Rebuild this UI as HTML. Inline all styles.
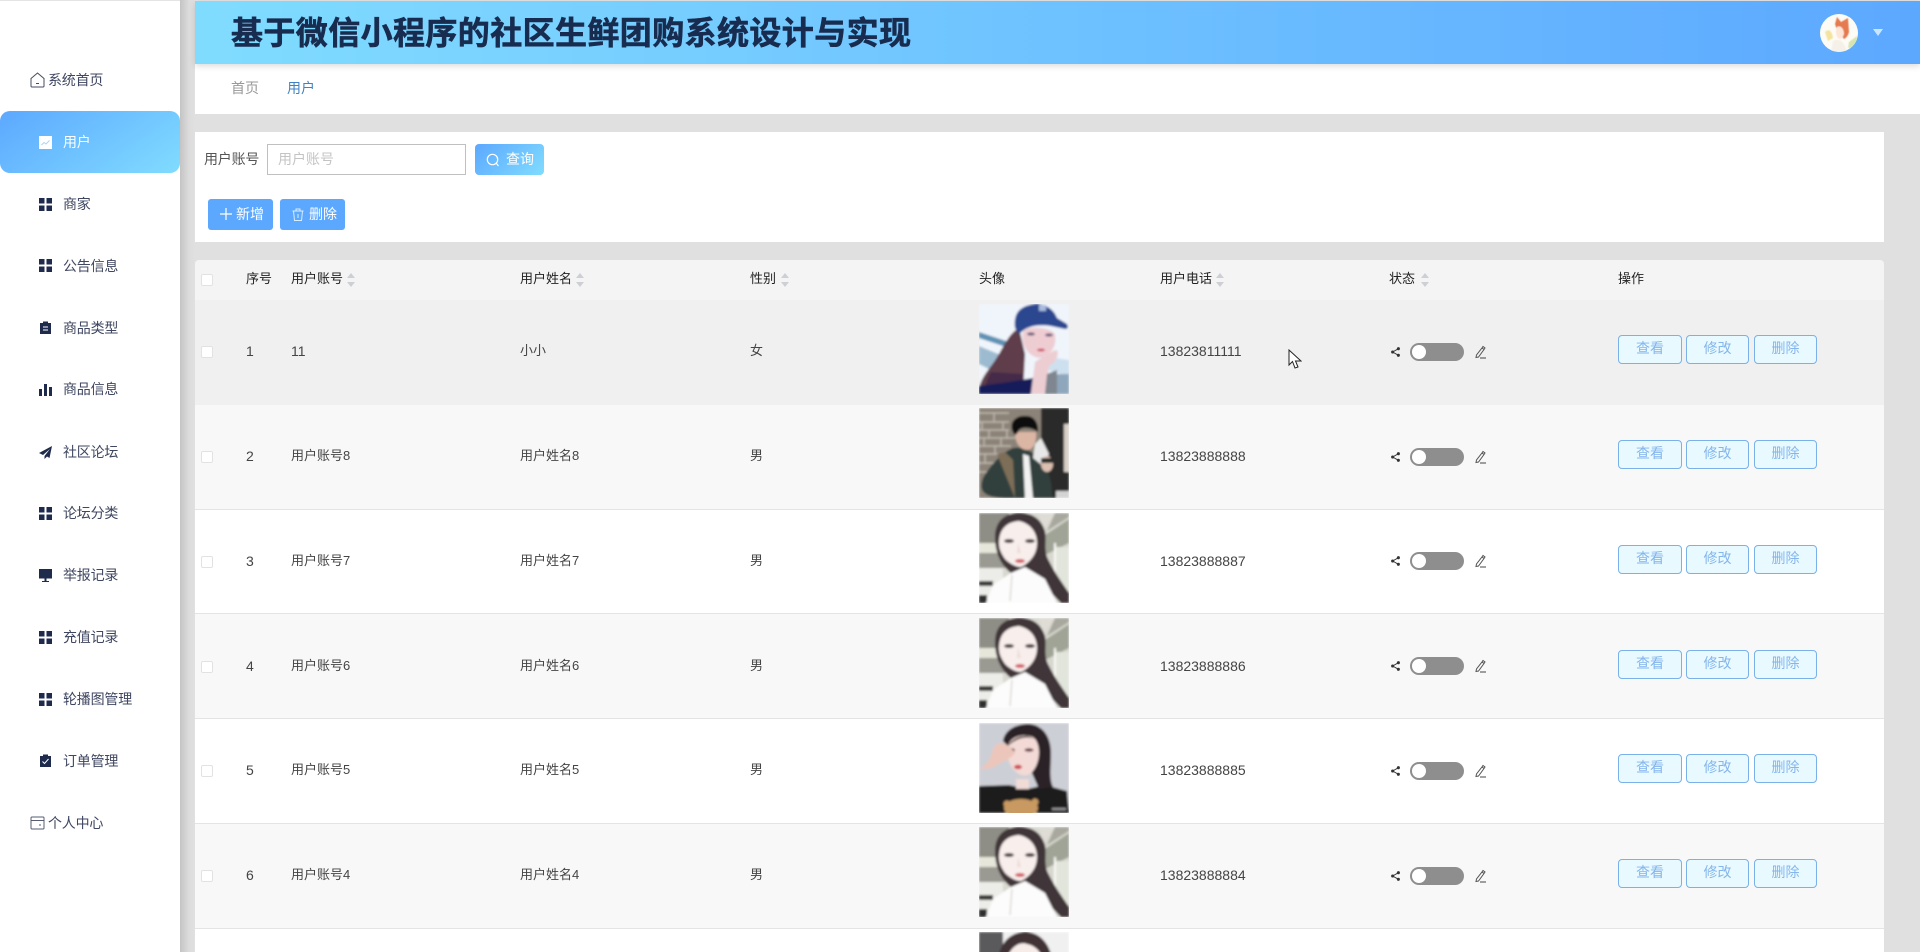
<!DOCTYPE html>
<html lang="zh-CN"><head><meta charset="utf-8"><title>用户</title>
<style>
*{box-sizing:border-box;margin:0;padding:0}
html,body{width:1920px;height:952px;overflow:hidden;background:#e0e0e0;font-family:"Liberation Sans","Noto Sans CJK SC",sans-serif;color:#444}
.a{position:absolute}
.t{position:absolute;line-height:20px;font-size:14px;white-space:nowrap}
.side{left:0;top:1px;width:180px;height:951px;background:#fff}
.shade{left:180px;top:0;width:15px;height:952px;background:linear-gradient(90deg,#c4c4c4,#dcdcdc 60%,#e0e0e0)}
.m{color:#3f4660;letter-spacing:-.2px}
.ic{position:absolute;left:39px;width:13px;height:13px;fill:#1f2b4d}
.head{left:195px;top:1px;width:1725px;height:63px;background:linear-gradient(90deg,#80dcff,#5ca8ff);box-shadow:0 2px 6px rgba(0,0,0,.15)}
.title{left:231px;top:7px;font-size:32px;font-weight:700;line-height:48px;color:#182c50;white-space:nowrap;letter-spacing:.4px;font-family:"Noto Sans CJK SC",sans-serif;-webkit-text-stroke:.6px #182c50}
.bc{left:195px;top:64px;width:1725px;height:50px;background:#fff}
.panel{left:195px;top:132px;width:1689px;height:110px;background:#fff}
.btn{position:absolute;border-radius:3px;color:#fff;font-size:14px;line-height:31px;white-space:nowrap}
.th{left:195px;top:260px;width:1689px;height:40px;background:#f4f4f4;border-radius:4px 4px 0 0}
.h{color:#222;font-size:13px!important}
.row{position:absolute;left:195px;width:1689px}
.b1{border-bottom:1px solid #e4e4e4}
.g{position:absolute;left:0;width:1920px;height:90px}
.g .t{top:37px;font-size:13px}
.g .t.n{font-size:14px}
.cb{position:absolute;left:201px;width:12px;height:12px;background:#fff;border:1px solid #e2e2e2;border-radius:2px}
.ph{position:absolute;left:979px;top:0;width:90px;height:90px}
.tg{position:absolute;left:1410px;top:39px;width:54px;height:18px;border-radius:9px;background:#8e8e8e}
.tg i{position:absolute;left:2px;top:2px;width:14px;height:14px;border-radius:50%;background:#fff}
.bt{position:absolute;top:31px;height:29px;border:1px solid #79b1e8;border-radius:4px;background:#e8faff;color:#84b5ec;font-size:14px;line-height:25px;text-align:center}
.sort{position:absolute;top:273px;width:8px;height:14px}
.s{position:absolute;left:1391px;top:43px;width:9px;height:10px}
.p{position:absolute;left:1474px;top:41px;width:13px;height:14px}
</style></head><body>
<svg width="0" height="0" style="position:absolute"><defs>
<filter id="bl" x="-5%" y="-5%" width="110%" height="110%"><feGaussianBlur stdDeviation="1.1"/></filter>
<clipPath id="cp"><rect width="90" height="90"/></clipPath>
<g id="grid"><rect x="0" y="0" width="5.5" height="5.5"/><rect x="7.5" y="0" width="5.5" height="5.5"/><rect x="0" y="7.5" width="5.5" height="5.5"/><rect x="7.5" y="7.5" width="5.5" height="5.5"/></g>
<g id="girl"><g clip-path="url(#cp)"><g filter="url(#bl)">
<rect width="90" height="90" fill="#d8d8d0"/>
<rect x="0" y="0" width="30" height="30" fill="#8e8e86"/>
<rect x="0" y="30" width="24" height="10" fill="#e6e6da"/>
<rect x="0" y="40" width="26" height="15" fill="#9a9a92"/>
<rect x="0" y="55" width="24" height="35" fill="#ecece8"/>
<rect x="0" y="68" width="14" height="5" fill="#3a3a3a"/><rect x="0" y="82" width="8" height="8" fill="#2e2e2e"/>
<polygon points="60,0 76,0 64,18" fill="#dedcd4"/>
<polygon points="68,18 90,4 90,0 76,0" fill="#a8a89e"/>
<polygon points="66,22 90,6 90,30 66,42" fill="#a0a496"/>
<rect x="75" y="34" width="15" height="44" fill="#e2e5dc"/>
<rect x="75" y="30" width="2" height="46" fill="#fafaf5"/>
<path d="M40 0C26 0 16 8 16 24C16 40 22 52 32 60L52 60C60 66 72 80 82 90L90 90L90 80C82 68 76 60 70 48C64 38 68 28 66 18C62 6 54 0 40 0Z" fill="#3f3638"/>
<path d="M20 30C20 18 26 9 40 8C50 10 58 18 58 30C58 42 50 50 42 54C36 54 30 50 26 46C22 40 20 36 20 30Z" fill="#f8eeec"/>
<ellipse cx="30" cy="28" rx="5" ry="2" fill="#4d4244"/><ellipse cx="51" cy="28" rx="5" ry="2" fill="#4d4244"/>
<path d="M39 30L38 40L42 40Z" fill="#eddcd8"/>
<ellipse cx="41" cy="48" rx="5" ry="2" fill="#d4636a"/>
<path d="M32 60L46 54L56 60L66 66L78 90L7 90L14 72Z" fill="#fcfcfc"/>
<path d="M33 62L31 88" stroke="#cec9c4" stroke-width="1"/>
</g></g></g>
<g id="p1"><g clip-path="url(#cp)"><g filter="url(#bl)">
<rect width="90" height="90" fill="#f0f5fc"/>
<polygon points="0,28 30,38 30,44 0,34" fill="#5f92b4"/>
<polygon points="0,42 24,52 12,66 0,60" fill="#9dbbd0"/>
<polygon points="62,52 90,56 90,72 62,64" fill="#cde0f0"/>
<rect x="62" y="70" width="28" height="20" fill="#8fa7bc"/>
<path d="M40 24C28 30 22 50 12 62C6 70 2 76 0 84L0 90L44 90L46 50Z" fill="#5e3d4c"/>
<path d="M12 68L2 90L40 90L44 70Z" fill="#44294a"/>
<path d="M0 82L0 90L52 90L54 74L30 78Z" fill="#171f5a"/>
<path d="M44 28C46 22 70 22 76 30C78 44 72 50 60 54C48 52 42 40 44 28Z" fill="#eecdd2"/>
<path d="M36 24C34 8 42 1 58 0C70 1 76 8 78 14L88 20C90 24 88 25 86 25L72 22C58 20 48 22 40 30Z" fill="#2c4690"/>
<rect x="60" y="1" width="7" height="6" fill="#a8bce0"/>
<ellipse cx="52" cy="30" rx="4" ry="1.6" fill="#6e5f7e"/><ellipse cx="70" cy="31" rx="4" ry="1.6" fill="#6e5f7e"/>
<ellipse cx="62" cy="46" rx="4" ry="1.5" fill="#d0526a"/>
<path d="M56 58C62 54 74 46 78 46C80 50 78 58 70 62L66 90L52 90Z" fill="#eccdd2"/>
<path d="M68 70L78 66L78 90L66 90Z" fill="#7f8690"/>
</g></g></g>
<g id="p2"><g clip-path="url(#cp)"><g filter="url(#bl)">
<rect width="90" height="90" fill="#8c8378"/>
<g stroke="#bdb8ae" stroke-width="1.4" fill="none"><path d="M0 5H30M0 22H30M0 30H40M0 38H32M0 46H30M0 55H30M0 64H20M0 14H30M15 5V14M3 14V22M24 14V22M10 22V30M28 22V30M5 30V38M22 30V38M16 38V46M6 46V55M24 46V55"/></g>
<rect x="62" y="0" width="28" height="90" fill="#2b2a2a"/>
<rect x="85" y="16" width="5" height="48" fill="#d8d0c8"/>
<rect x="77" y="83" width="13" height="7" fill="#d4d4d4"/>
<path d="M30 90C2 90 0 82 4 70C12 56 24 44 34 40C44 38 58 44 66 58C74 72 72 84 74 90Z" fill="#32403c"/>
<path d="M44 46L50 48L54 90L46 90Z" fill="#f2f2f2"/>
<path d="M26 44L18 46L36 90L34 52Z" fill="#7d6e58"/>
<path d="M36 24C36 36 42 42 48 42C54 42 58 34 57 24Z" fill="#dcb6a4"/>
<path d="M33 22C30 12 40 7 46 8C54 7 60 14 59 24C54 20 44 18 40 22C38 26 36 30 33 22Z" fill="#111"/>
<path d="M56 36L62 30L70 46L64 58L54 50Z" fill="#e8e8e8"/>
<ellipse cx="68" cy="56" rx="6" ry="8" fill="#dcc0b0"/>
<rect x="62" y="50" width="12" height="5" fill="#2a2a2a"/>
</g></g></g>
<g id="p5"><g clip-path="url(#cp)"><g filter="url(#bl)">
<rect width="90" height="90" fill="#cdcfd6"/>
<path d="M0 90L0 63L30 62L48 66L66 62L88 68L90 90Z" fill="#1c1c1e"/>
<path d="M24 18C26 6 38 1 50 1C64 2 72 14 72 30C72 44 70 56 74 64L60 66L52 48Z" fill="#2a2326"/>
<path d="M28 26C30 14 42 10 54 14C62 20 62 38 54 48C50 54 42 54 36 48C30 42 28 34 28 26Z" fill="#f3dad6"/>
<path d="M28 24C34 14 46 10 56 16C48 13 38 14 28 24Z" fill="#2a2326"/>
<ellipse cx="32" cy="27" rx="4" ry="1.8" fill="#6d4446"/><ellipse cx="50" cy="27" rx="4.5" ry="1.8" fill="#6d4446"/>
<ellipse cx="39" cy="44" rx="4" ry="2.2" fill="#cf4b54"/>
<path d="M0 46C8 42 12 36 14 26C18 18 26 19 32 25L36 30C32 36 24 38 18 42C12 46 6 46 0 46Z" fill="#ecc6ba"/>
<path d="M37 56H50V66H37Z" fill="#f1dbd6"/>
<ellipse cx="42" cy="85" rx="17" ry="9" fill="#c89a62"/>
<circle cx="28" cy="81" r="3.5" fill="#c89a62"/><circle cx="56" cy="79" r="3.5" fill="#c89a62"/>
<rect x="73" y="85" width="14" height="2" fill="#9a9a9e"/>
</g></g></g>
<g id="p7"><g clip-path="url(#cp)"><g filter="url(#bl)">
<rect width="90" height="90" fill="#f0f0f0"/>
<rect width="24" height="90" fill="#5a5a5c"/>
<path d="M20 22C24 6 36 0 46 0C58 0 68 8 72 22L72 90L20 90Z" fill="#3f3335"/>
<path d="M28 28C30 16 40 9 48 12C58 14 64 22 64 32L64 90L28 90Z" fill="#f8ece8"/>
</g></g></g>
<g id="pen"><path d="M2.5 10L2 12.5L4.5 12L10 4.5L8 3Z M8 3L9 1.5L11 3L10 4.5" fill="none" stroke="#555" stroke-width="1"/><path d="M6 13H12" stroke="#444" stroke-width="1"/></g>
<g id="share"><circle cx="2" cy="6" r="1.9" fill="#333"/><circle cx="9" cy="2" r="1.9" fill="#333"/><circle cx="9" cy="10" r="1.9" fill="#333"/><path d="M2 6L9 2M2 6L9 10" stroke="#333" stroke-width="1.2"/></g>
<g id="srt"><path d="M4 0L8 5H0Z M4 14L0 9H8Z" fill="#ccd0d5"/></g>
</defs></svg>

<!-- sidebar -->
<div class="a" style="left:0;top:0;width:1920px;height:1px;background:#e4e4e4"></div>
<div class="a shade"></div>
<div class="a side"></div>
<svg class="a" style="left:30px;top:72px" width="15" height="16" viewBox="0 0 15 16" fill="none" stroke="#444c60" stroke-width="1"><path d="M1 6.5L7.5 1L14 6.5V14a1 1 0 0 1-1 1H2a1 1 0 0 1-1-1Z"/><path d="M6 11.5H9"/></svg>
<div class="t m" style="left:48px;top:70px">系统首页</div>
<div class="a" style="left:0;top:111px;width:180px;height:62px;border-radius:10px;background:linear-gradient(145deg,#5ca8ff,#80dcff)"></div>
<svg class="a" style="left:39px;top:136px" width="13" height="13" viewBox="0 0 13 13"><rect width="13" height="13" fill="#fff"/><path d="M2.5 9L5 6.5L7 8L10.5 4.5" stroke="#a8d4f8" fill="none"/></svg>
<div class="t" style="left:63px;top:132px;color:#fff;letter-spacing:-.2px">用户</div>

<svg class="ic" style="top:198px" viewBox="0 0 13 13"><use href="#grid"/></svg><div class="t m" style="left:63px;top:194px">商家</div>
<svg class="ic" style="top:259px" viewBox="0 0 13 13"><use href="#grid"/></svg><div class="t m" style="left:63px;top:256px">公告信息</div>
<svg class="ic" style="top:321px" viewBox="0 0 13 13"><path d="M1 2H4V0.5H9V2H12V13H1Z"/><path d="M4 6H9M4 9H9" stroke="#fff"/></svg><div class="t m" style="left:63px;top:318px">商品类型</div>
<svg class="ic" style="top:383px" viewBox="0 0 13 13"><rect x="0" y="6" width="3" height="7"/><rect x="5" y="1" width="3" height="12"/><rect x="10" y="4" width="3" height="9"/></svg><div class="t m" style="left:63px;top:379px">商品信息</div>
<svg class="ic" style="top:446px" viewBox="0 0 13 13"><path d="M13 0L0 7L4 9L11 3L5.5 10V13L8 10.5L10.5 12Z"/></svg><div class="t m" style="left:63px;top:442px">社区论坛</div>
<svg class="ic" style="top:507px" viewBox="0 0 13 13"><use href="#grid"/></svg><div class="t m" style="left:63px;top:503px">论坛分类</div>
<svg class="ic" style="top:569px" viewBox="0 0 13 13"><rect width="13" height="9.5"/><rect x="5.5" y="9.5" width="2" height="2.5"/><rect x="3" y="12" width="7" height="1"/></svg><div class="t m" style="left:63px;top:565px">举报记录</div>
<svg class="ic" style="top:631px" viewBox="0 0 13 13"><use href="#grid"/></svg><div class="t m" style="left:63px;top:627px">充值记录</div>
<svg class="ic" style="top:693px" viewBox="0 0 13 13"><use href="#grid"/></svg><div class="t m" style="left:63px;top:689px">轮播图管理</div>
<svg class="ic" style="top:754px" viewBox="0 0 13 13"><path d="M1 2H4V0.5H9V2H12V13H1Z"/><path d="M3.5 7.5L5.5 9.5L9.5 5" stroke="#fff" fill="none"/></svg><div class="t m" style="left:63px;top:751px">订单管理</div>
<svg class="a" style="left:30px;top:816px" width="15" height="14" viewBox="0 0 15 14" fill="none" stroke="#555c70"><rect x="1" y="1" width="13" height="12" rx="1"/><path d="M1 4.5H14M9 9H11"/></svg>
<div class="t m" style="left:48px;top:813px">个人中心</div>

<!-- header -->
<div class="a bc"></div>
<div class="a head"></div>
<div class="a title">基于微信小程序的社区生鲜团购系统设计与实现</div>
<svg class="a" style="left:1820px;top:14px" width="38" height="38" viewBox="0 0 38 38"><defs><clipPath id="av"><circle cx="19" cy="19" r="19"/></clipPath><filter id="bl2"><feGaussianBlur stdDeviation=".6"/></filter></defs><g clip-path="url(#av)"><rect width="38" height="38" fill="#fdfbf5"/><g filter="url(#bl2)"><path d="M5 18C9 14 12 17 13 24L8 27Z" fill="#f4e3a0"/><path d="M29 28L37 22V34H28Z" fill="#d8e4b0"/><path d="M15 10L17 3L21 8L28 4L29 18C28 22 26 24 24 25L17 16Z" fill="#e67a50"/><path d="M17 13C20 11 24 14 24 20C23 24 20 26 18 24C16 21 15 17 17 13Z" fill="#fbe6d8"/><path d="M13 27C18 24 24 26 27 38H11Z" fill="#f5f1e8"/></g></g></svg>
<svg class="a" style="left:1873px;top:29px" width="10" height="7" viewBox="0 0 10 7"><path d="M0 0H10L5 7Z" fill="#c8e6ff"/></svg>
<div class="t" style="left:231px;top:78px;color:#999">首页</div>
<div class="t" style="left:287px;top:78px;color:#3f83c4">用户</div>

<!-- search panel -->
<div class="a panel"></div>
<div class="t" style="left:204px;top:149px;color:#555;letter-spacing:-.2px">用户账号</div>
<div class="a" style="left:267px;top:144px;width:199px;height:31px;background:#fff;border:1px solid #c0c0c0"></div>
<div class="t" style="left:278px;top:149px;color:#c4c4c4">用户账号</div>
<div class="btn" style="left:475px;top:144px;width:69px;height:31px;border-radius:4px;background:linear-gradient(135deg,#5ca8ff,#80dcff)"></div>
<svg class="a" style="left:486px;top:153px" width="14" height="14" viewBox="0 0 14 14" fill="none" stroke="#fff" stroke-width="1.2"><circle cx="6.5" cy="6.5" r="5.2"/><path d="M10.5 10.5L12.5 13"/></svg>
<div class="t" style="left:506px;top:149px;color:#fff">查询</div>
<div class="btn" style="left:208px;top:199px;width:65px;height:31px;background:#5ca8ff"></div>
<svg class="a" style="left:220px;top:208px" width="12" height="12" viewBox="0 0 12 12"><path d="M6 0V12M0 6H12" stroke="#fff" stroke-width="1.2"/></svg>
<div class="t" style="left:236px;top:204px;color:#fff">新增</div>
<div class="btn" style="left:280px;top:199px;width:65px;height:31px;background:#5ca8ff"></div>
<svg class="a" style="left:292px;top:208px" width="12" height="13" viewBox="0 0 12 13" fill="none" stroke="#d8eeff"><path d="M0.5 3H11.5M4 3V1H8V3M1.5 3L2.5 12.5H9.5L10.5 3M6 6V10"/></svg>
<div class="t" style="left:309px;top:204px;color:#fff">删除</div>

<!-- table header -->
<div class="a th"></div>
<div class="cb" style="top:274px"></div>
<div class="t h" style="left:246px;top:269px">序号</div>
<div class="t h" style="left:291px;top:269px">用户账号</div><svg class="sort" style="left:347px" viewBox="0 0 8 14"><use href="#srt"/></svg>
<div class="t h" style="left:520px;top:269px">用户姓名</div><svg class="sort" style="left:576px" viewBox="0 0 8 14"><use href="#srt"/></svg>
<div class="t h" style="left:750px;top:269px">性别</div><svg class="sort" style="left:781px" viewBox="0 0 8 14"><use href="#srt"/></svg>
<div class="t h" style="left:979px;top:269px">头像</div>
<div class="t h" style="left:1160px;top:269px">用户电话</div><svg class="sort" style="left:1216px" viewBox="0 0 8 14"><use href="#srt"/></svg>
<div class="t h" style="left:1389px;top:269px">状态</div><svg class="sort" style="left:1421px" viewBox="0 0 8 14"><use href="#srt"/></svg>
<div class="t h" style="left:1618px;top:269px">操作</div>

<!-- rows -->
<div class="row" style="top:300px;height:105px;background:#f0f0f0"></div>
<div class="row b1" style="top:405px;height:105px;background:#f8f8f8"></div>
<div class="row b1" style="top:510px;height:104px;background:#fff"></div>
<div class="row b1" style="top:614px;height:105px;background:#f8f8f8"></div>
<div class="row b1" style="top:719px;height:105px;background:#fff"></div>
<div class="row b1" style="top:824px;height:105px;background:#f8f8f8"></div>
<div class="row" style="top:929px;height:23px;background:#fff"></div>

<div class="g" style="top:304px"><div class="cb" style="top:42px"></div><div class="t n" style="left:246px">1</div><div class="t n" style="left:291px">11</div><div class="t" style="left:520px">小小</div><div class="t" style="left:750px">女</div><svg class="ph" viewBox="0 0 90 90"><use href="#p1"/></svg><div class="t n" style="left:1160px">13823811111</div><svg class="s" viewBox="0 0 11 12"><use href="#share"/></svg><div class="tg"><i></i></div><svg class="p" viewBox="0 0 13 14"><use href="#pen"/></svg><div class="bt" style="left:1618px;width:64px">查看</div><div class="bt" style="left:1686px;width:63px">修改</div><div class="bt" style="left:1754px;width:63px">删除</div></div>

<div class="g" style="top:408px"><div class="cb" style="top:43px"></div><div class="t n" style="left:246px;top:38px">2</div><div class="t" style="left:291px;top:38px">用户账号8</div><div class="t" style="left:520px;top:38px">用户姓名8</div><div class="t" style="left:750px;top:38px">男</div><svg class="ph" viewBox="0 0 90 90"><use href="#p2"/></svg><div class="t n" style="left:1160px;top:38px">13823888888</div><svg class="s" style="top:44px" viewBox="0 0 11 12"><use href="#share"/></svg><div class="tg" style="top:40px"><i></i></div><svg class="p" style="top:42px" viewBox="0 0 13 14"><use href="#pen"/></svg><div class="bt" style="left:1618px;width:64px;top:32px">查看</div><div class="bt" style="left:1686px;width:63px;top:32px">修改</div><div class="bt" style="left:1754px;width:63px;top:32px">删除</div></div>

<div class="g" style="top:513px"><div class="cb" style="top:43px"></div><div class="t n" style="left:246px;top:38px">3</div><div class="t" style="left:291px;top:38px">用户账号7</div><div class="t" style="left:520px;top:38px">用户姓名7</div><div class="t" style="left:750px;top:38px">男</div><svg class="ph" viewBox="0 0 90 90"><use href="#girl"/></svg><div class="t n" style="left:1160px;top:38px">13823888887</div><svg class="s" viewBox="0 0 11 12"><use href="#share"/></svg><div class="tg"><i></i></div><svg class="p" viewBox="0 0 13 14"><use href="#pen"/></svg><div class="bt" style="left:1618px;width:64px;top:32px">查看</div><div class="bt" style="left:1686px;width:63px;top:32px">修改</div><div class="bt" style="left:1754px;width:63px;top:32px">删除</div></div>

<div class="g" style="top:618px"><div class="cb" style="top:43px"></div><div class="t n" style="left:246px;top:38px">4</div><div class="t" style="left:291px;top:38px">用户账号6</div><div class="t" style="left:520px;top:38px">用户姓名6</div><div class="t" style="left:750px;top:38px">男</div><svg class="ph" viewBox="0 0 90 90"><use href="#girl"/></svg><div class="t n" style="left:1160px;top:38px">13823888886</div><svg class="s" viewBox="0 0 11 12"><use href="#share"/></svg><div class="tg"><i></i></div><svg class="p" viewBox="0 0 13 14"><use href="#pen"/></svg><div class="bt" style="left:1618px;width:64px;top:32px">查看</div><div class="bt" style="left:1686px;width:63px;top:32px">修改</div><div class="bt" style="left:1754px;width:63px;top:32px">删除</div></div>

<div class="g" style="top:723px"><div class="cb" style="top:42px"></div><div class="t n" style="left:246px">5</div><div class="t" style="left:291px">用户账号5</div><div class="t" style="left:520px">用户姓名5</div><div class="t" style="left:750px">男</div><svg class="ph" viewBox="0 0 90 90"><use href="#p5"/></svg><div class="t n" style="left:1160px">13823888885</div><svg class="s" viewBox="0 0 11 12"><use href="#share"/></svg><div class="tg"><i></i></div><svg class="p" viewBox="0 0 13 14"><use href="#pen"/></svg><div class="bt" style="left:1618px;width:64px">查看</div><div class="bt" style="left:1686px;width:63px">修改</div><div class="bt" style="left:1754px;width:63px">删除</div></div>

<div class="g" style="top:827px"><div class="cb" style="top:43px"></div><div class="t n" style="left:246px;top:38px">6</div><div class="t" style="left:291px;top:38px">用户账号4</div><div class="t" style="left:520px;top:38px">用户姓名4</div><div class="t" style="left:750px;top:38px">男</div><svg class="ph" viewBox="0 0 90 90"><use href="#girl"/></svg><div class="t n" style="left:1160px;top:38px">13823888884</div><svg class="s" style="top:44px" viewBox="0 0 11 12"><use href="#share"/></svg><div class="tg" style="top:40px"><i></i></div><svg class="p" style="top:42px" viewBox="0 0 13 14"><use href="#pen"/></svg><div class="bt" style="left:1618px;width:64px;top:32px">查看</div><div class="bt" style="left:1686px;width:63px;top:32px">修改</div><div class="bt" style="left:1754px;width:63px;top:32px">删除</div></div>

<svg class="a" style="left:979px;top:932px" width="90" height="20" viewBox="0 0 90 20"><use href="#p7"/></svg>

<svg class="a" style="left:1288px;top:349px" width="14" height="21" viewBox="0 0 14 21"><path d="M1 1V16L4.5 12.5L7 19L10 18L7.5 12H13Z" fill="#fff" stroke="#222" stroke-width="1"/></svg>
</body></html>
